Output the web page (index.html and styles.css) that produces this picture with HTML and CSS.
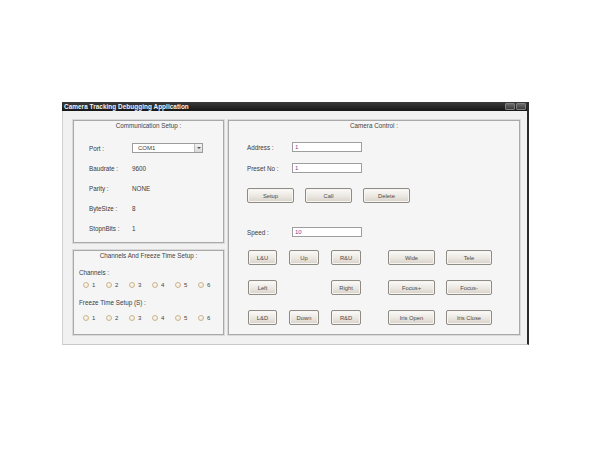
FILE: index.html
```html
<!DOCTYPE html>
<html>
<head>
<meta charset="utf-8">
<link rel="stylesheet" href="styles.css">
</head>
<body>
<div class="stage">
  <div class="window">
    <div class="titlebar">
      <span class="title">Camera Tracking Debugging Application</span>
      <div class="winbtns"><span class="wb"></span><span class="wb"></span></div>
    </div>
    <div class="client">
      <div class="leftcol">
        <section class="group comm">
          <div class="gtitle">Communication Setup :</div>
          <div class="form">
            <div class="lbl">Port :</div>
            <div class="val"><div class="select"><span>COM1</span><span class="drop"></span></div></div>
            <div class="lbl">Baudrate :</div><div class="val">9600</div>
            <div class="lbl">Parity :</div><div class="val">NONE</div>
            <div class="lbl">ByteSize :</div><div class="val">8</div>
            <div class="lbl">StopnBits :</div><div class="val">1</div>
          </div>
        </section>
        <section class="group chan">
          <div class="gtitle">Channels And Freeze Time Setup :</div>
          <div class="sublbl first">Channels :</div>
          <div class="radios">
            <span class="radio"><i></i>1</span><span class="radio"><i></i>2</span><span class="radio"><i></i>3</span><span class="radio"><i></i>4</span><span class="radio"><i></i>5</span><span class="radio"><i></i>6</span>
          </div>
          <div class="sublbl second">Freeze Time Setup (S) :</div>
          <div class="radios r2">
            <span class="radio"><i></i>1</span><span class="radio"><i></i>2</span><span class="radio"><i></i>3</span><span class="radio"><i></i>4</span><span class="radio"><i></i>5</span><span class="radio"><i></i>6</span>
          </div>
        </section>
      </div>
      <section class="group camera">
        <div class="gtitle">Camera Control :</div>
        <div class="field f-address"><span class="flbl">Address :</span><span class="input">1</span></div>
        <div class="field f-preset"><span class="flbl">Preset No :</span><span class="input">1</span></div>
        <div class="btnrow">
          <span class="btn w47">Setup</span><span class="btn w47">Call</span><span class="btn w47">Delete</span>
        </div>
        <div class="field f-speed"><span class="flbl">Speed :</span><span class="input">10</span></div>
        <div class="pad">
          <div class="dirgrid">
            <span class="btn">L&amp;U</span><span class="btn">Up</span><span class="btn">R&amp;U</span>
            <span class="btn">Left</span><span class="empty"></span><span class="btn">Right</span>
            <span class="btn">L&amp;D</span><span class="btn">Down</span><span class="btn">R&amp;D</span>
          </div>
          <div class="lensgrid">
            <span class="btn">Wide</span><span class="btn">Tele</span>
            <span class="btn">Focus+</span><span class="btn">Focus-</span>
            <span class="btn">Iris Open</span><span class="btn">Iris Close</span>
          </div>
        </div>
      </section>
    </div>
  </div>
</div>
</body>
</html>
```

FILE: styles.css
```css
* { box-sizing: border-box; }
html, body { margin: 0; padding: 0; background: #ffffff; }
body { font-family: "Liberation Sans", Arial, sans-serif; color: #3a3a3a; font-size: 6.3px; }

.stage { padding: 102px 0 0 62px; }

.window {
  width: 467px;
  height: 243px;
  border-left: 1px solid #cfcfcf;
  border-right: 2px solid #2b2b2b;
  border-bottom: 1px solid #c9c9c9;
  background: #f1f1f1;
  display: flex;
  flex-direction: column;
}

.titlebar {
  height: 9px;
  background: linear-gradient(#3a3a3a, #161616);
  display: flex;
  align-items: center;
  justify-content: space-between;
  padding: 0 1px 0 2px;
  margin-left: -1px;
}
.title { color: #f4f4f4; font-weight: bold; font-size: 6.4px; line-height: 9px; letter-spacing: 0.05px; }
.winbtns { display: flex; gap: 1px; }
.wb {
  width: 10px; height: 7px;
  background: linear-gradient(#6a6a6a, #3c3c3c);
  border: 1px solid #7d7d7d;
  border-radius: 1px;
}

.client {
  flex: 1;
  display: flex;
  gap: 4px;
  padding: 9px 7px 9px 10px;
}

.leftcol { width: 151px; display: flex; flex-direction: column; gap: 7px; }

.group {
  border: 1px solid #a9a9a9;
  box-shadow: 0 0 0 1px #dadada;
  background: #f5f5f5;
}
.gtitle { height: 9px; line-height: 9px; text-align: center; color: #444; }

.comm { height: 123px; }
.form {
  margin-top: 8px;
  padding-left: 15px;
  display: grid;
  grid-template-columns: 43px 1fr;
  grid-auto-rows: 20px;
  align-items: center;
}
.select {
  width: 71px; height: 10px;
  border: 1px solid #9c9c9c;
  background: #fff;
  display: flex; align-items: center; justify-content: space-between;
  padding-left: 5px;
  font-size: 6px;
}
.drop {
  width: 8px; height: 8px;
  background: linear-gradient(#f3f3f3, #d9d9d9);
  border-left: 1px solid #bdbdbd;
  position: relative;
}
.drop::after {
  content: "";
  position: absolute; left: 2px; top: 3px;
  border-left: 2px solid transparent; border-right: 2px solid transparent;
  border-top: 2px solid #555;
}

.chan { flex: 1; }
.sublbl { padding-left: 5px; line-height: 8px; height: 8px; }
.sublbl.first { margin-top: 9px; }
.sublbl.second { margin-top: 10px; }
.radios { display: flex; padding-left: 9px; margin-top: 4px; height: 8px; align-items: center; }
.radios.r2 { margin-top: 7px; }
.radio { width: 23px; display: flex; align-items: center; gap: 3px; font-size: 6px; color: #444; }
.radio i {
  display: block; width: 6px; height: 6px; border-radius: 50%;
  border: 1px solid #cdb690;
  background: radial-gradient(circle at 40% 40%, #fdfbf7, #e6ded0);
}

.camera { flex: 1; padding-left: 18px; }
.camera .gtitle { margin-left: -18px; }
.field { display: flex; align-items: center; height: 10px; }
.flbl { width: 45px; }
.input {
  width: 70px; height: 10px;
  border: 1px solid #9e9e9e;
  background: #fff;
  color: #7b3fa0;
  padding-left: 2px;
  line-height: 8px;
  font-size: 6px;
}
.f-address { margin-top: 12px; }
.f-preset { margin-top: 11px; }
.btnrow { display: flex; gap: 11px; margin-top: 15px; }
.f-speed { margin-top: 24px; }

.btn {
  display: flex; align-items: center; justify-content: center;
  height: 15px;
  border: 1px solid #8e8a84;
  border-radius: 2px;
  background: linear-gradient(#fcfbf9, #ebe7e1 55%, #d7d1c8);
  box-shadow: inset 0 0 0 1px #f7f5f1;
  color: #4a4a4a;
  font-size: 5.8px;
}
.w47 { width: 47px; }

.pad { display: flex; margin-top: 13px; padding-left: 1px; }
.dirgrid {
  display: grid;
  grid-template-columns: 29px 30px 30px;
  column-gap: 12px;
  row-gap: 15px;
}
.lensgrid {
  margin-left: 27px;
  display: grid;
  grid-template-columns: 47px 46px;
  column-gap: 11px;
  row-gap: 15px;
}
```
